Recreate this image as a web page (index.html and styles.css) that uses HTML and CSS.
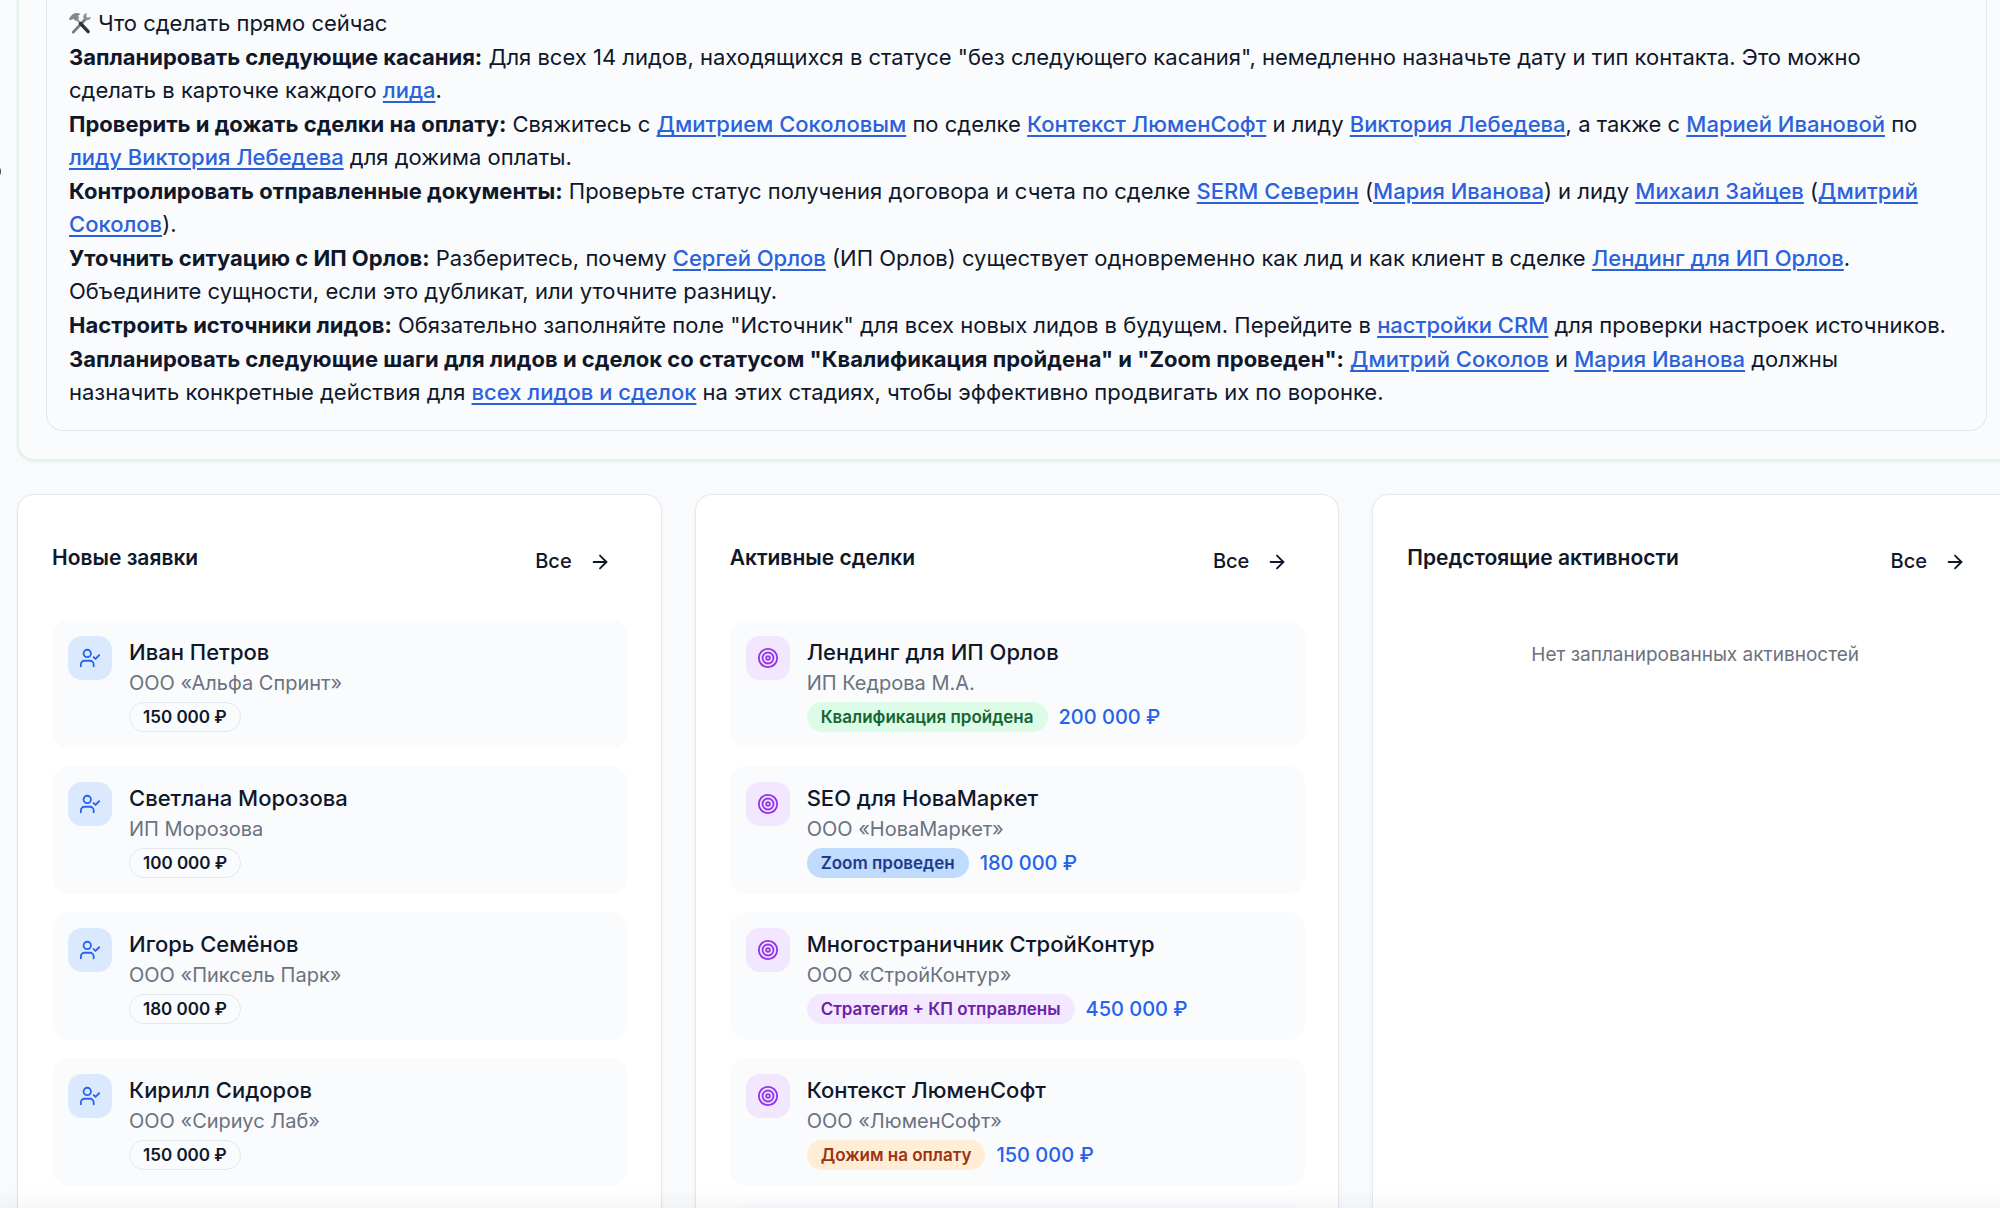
FILE: index.html
```html
<!DOCTYPE html>
<html lang="ru">
<head>
<meta charset="utf-8">
<title>CRM</title>
<meta name="viewport" content="width=device-width, initial-scale=1">
<link rel="stylesheet" href="styles.css">
</head>
<body>
<svg class="sprite" aria-hidden="true">
  <symbol id="user-check" viewBox="0 0 24 24"><path d="m16 11 2 2 4-4"/><path d="M16 21v-2a4 4 0 0 0-4-4H6a4 4 0 0 0-4 4v2"/><circle cx="9" cy="7" r="4"/></symbol>
  <symbol id="target" viewBox="0 0 24 24"><circle cx="12" cy="12" r="10"/><circle cx="12" cy="12" r="6"/><circle cx="12" cy="12" r="2"/></symbol>
  <symbol id="arrow" viewBox="0 0 24 24"><path d="M5 12h14"/><path d="m12 5 7 7-7 7"/></symbol>
</svg>
<span class="edge-mark" aria-hidden="true"></span>
<main class="page">
  <section class="panel">
    <div class="report">
      <p><svg class="tools" viewBox="0 0 24 24" aria-hidden="true"><path d="M17 8 4.500 21.500" stroke="#777b81" stroke-width="3" stroke-linecap="round"/><path d="M18.500 1.500q-4.500 1-3.500 5.500l2 2q5 1 6-3.500l-3.500 1-1.500-1.500z" fill="#8d9298"/><path d="m8 8 4 4.500" stroke="#8d9298" stroke-width="2"/><path d="m12 12.500 8 8.500" stroke="#2f3135" stroke-width="3.500" stroke-linecap="round"/><path d="M1 9.500 0 7l3.500-4Q8 .500 12 2.500L9.500 4.500l1 2.500-3.500 3-2.500-2.500z" fill="#83888e"/></svg> Что сделать прямо сейчас</p>
      <p><strong>Запланировать следующие касания:</strong> Для всех 14 лидов, находящихся в статусе "без следующего касания", немедленно назначьте дату и тип контакта. Это можно сделать в карточке каждого <a href="#">лида</a>.</p>
      <p><strong>Проверить и дожать сделки на оплату:</strong> Свяжитесь с <a href="#">Дмитрием Соколовым</a> по сделке <a href="#">Контекст ЛюменСофт</a> и лиду <a href="#">Виктория Лебедева</a>, а также с <a href="#">Марией Ивановой</a> по <a href="#">лиду Виктория Лебедева</a> для дожима оплаты.</p>
      <p><strong>Контролировать отправленные документы:</strong> Проверьте статус получения договора и счета по сделке <a href="#">SERM Северин</a> (<a href="#">Мария Иванова</a>) и лиду <a href="#">Михаил Зайцев</a> (<a href="#">Дмитрий Соколов</a>).</p>
      <p><strong>Уточнить ситуацию с ИП Орлов:</strong> Разберитесь, почему <a href="#">Сергей Орлов</a> (ИП Орлов) существует одновременно как лид и как клиент в сделке <a href="#">Лендинг для ИП Орлов</a>. Объедините сущности, если это дубликат, или уточните разницу.</p>
      <p><strong>Настроить источники лидов:</strong> Обязательно заполняйте поле "Источник" для всех новых лидов в будущем. Перейдите в <a href="#">настройки CRM</a> для проверки настроек источников.</p>
      <p><strong>Запланировать следующие шаги для лидов и сделок со статусом "Квалификация пройдена" и "Zoom проведен":</strong> <a href="#">Дмитрий Соколов</a> и <a href="#">Мария Иванова</a> должны назначить конкретные действия для <a href="#">всех лидов и сделок</a> на этих стадиях, чтобы эффективно продвигать их по воронке.</p>
    </div>
  </section>
  <div class="columns">
    <section class="card">
      <header class="card-head"><h2>Новые заявки</h2><a class="all" href="#">Все <svg class="icon"><use href="#arrow"/></svg></a></header>
      <ul class="list">
        <li class="row"><span class="avatar lead"><svg class="icon"><use href="#user-check"/></svg></span><div><h3>Иван Петров</h3><p class="org">ООО «Альфа Спринт»</p><div class="meta"><span class="badge outline">150 000 ₽</span></div></div></li>
        <li class="row"><span class="avatar lead"><svg class="icon"><use href="#user-check"/></svg></span><div><h3>Светлана Морозова</h3><p class="org">ИП Морозова</p><div class="meta"><span class="badge outline">100 000 ₽</span></div></div></li>
        <li class="row"><span class="avatar lead"><svg class="icon"><use href="#user-check"/></svg></span><div><h3>Игорь Семёнов</h3><p class="org">ООО «Пиксель Парк»</p><div class="meta"><span class="badge outline">180 000 ₽</span></div></div></li>
        <li class="row"><span class="avatar lead"><svg class="icon"><use href="#user-check"/></svg></span><div><h3>Кирилл Сидоров</h3><p class="org">ООО «Сириус Лаб»</p><div class="meta"><span class="badge outline">150 000 ₽</span></div></div></li>
      </ul>
    </section>
    <section class="card">
      <header class="card-head"><h2>Активные сделки</h2><a class="all" href="#">Все <svg class="icon"><use href="#arrow"/></svg></a></header>
      <ul class="list">
        <li class="row"><span class="avatar deal"><svg class="icon"><use href="#target"/></svg></span><div><h3>Лендинг для ИП Орлов</h3><p class="org">ИП Кедрова М.А.</p><div class="meta"><span class="badge green">Квалификация пройдена</span><span class="sum">200 000 ₽</span></div></div></li>
        <li class="row"><span class="avatar deal"><svg class="icon"><use href="#target"/></svg></span><div><h3>SEO для НоваМаркет</h3><p class="org">ООО «НоваМаркет»</p><div class="meta"><span class="badge blue">Zoom проведен</span><span class="sum">180 000 ₽</span></div></div></li>
        <li class="row"><span class="avatar deal"><svg class="icon"><use href="#target"/></svg></span><div><h3>Многостраничник СтройКонтур</h3><p class="org">ООО «СтройКонтур»</p><div class="meta"><span class="badge purple">Стратегия + КП отправлены</span><span class="sum">450 000 ₽</span></div></div></li>
        <li class="row"><span class="avatar deal"><svg class="icon"><use href="#target"/></svg></span><div><h3>Контекст ЛюменСофт</h3><p class="org">ООО «ЛюменСофт»</p><div class="meta"><span class="badge orange">Дожим на оплату</span><span class="sum">150 000 ₽</span></div></div></li>
        <li class="row"></li>
      </ul>
    </section>
    <section class="card">
      <header class="card-head"><h2>Предстоящие активности</h2><a class="all" href="#">Все <svg class="icon"><use href="#arrow"/></svg></a></header>
      <p class="empty">Нет запланированных активностей</p>
    </section>
  </div>
</main>
</body>
</html>
```
FILE: styles.css
```css
* { box-sizing: border-box; }
html, body { margin: 0; height: 100%; }
body {
  overflow: hidden;
  background: #f9fafc;
  color: #0f172a;
  font-family: Inter, "Liberation Sans", sans-serif;
  font-size: 22px;
  line-height: 33px;
}
/* soft shade along the bottom edge of the window */
body::after {
  content: "";
  position: fixed;
  inset: auto 0 0;
  height: 20px;
  background: linear-gradient(rgba(15, 23, 42, 0), rgba(15, 23, 42, .03));
}
h2, h3, p, ul { margin: 0; padding: 0; }
.sprite { position: absolute; width: 0; height: 0; }
.edge-mark {
  position: absolute;
  left: -14px;
  top: 164px;
  width: 15px;
  height: 15px;
  border: 2px solid #334155;
  border-radius: 50%;
}
.icon {
  width: 22px;
  height: 22px;
  fill: none;
  stroke: currentColor;
  stroke-width: 2;
  stroke-linecap: round;
  stroke-linejoin: round;
}
.page { margin-right: -17px; padding-left: 17px; }
.panel {
  padding: 0 28px 28px 27px;
  border: 2px solid #def3ec;
  border-top: 0;
  border-radius: 0 0 17px 17px;
  background: #fafbfd;
  box-shadow: 0 1px 3px rgba(15, 23, 42, .06);
}
.report {
  display: flex;
  flex-direction: column;
  gap: 1px;
  padding: 7px 35px 21px 22px;
  border: 1px solid #e2e5ea;
  border-top: 0;
  border-radius: 0 0 17px 17px;
}
.report a {
  color: #2b62dc;
  font-weight: 500;
  text-decoration: underline;
  text-decoration-thickness: 2px;
  text-underline-offset: 3px;
}
.report strong { font-weight: 700; }
.tools { width: 23px; height: 24px; vertical-align: -4px; }
.columns {
  display: grid;
  grid-template-columns: repeat(3, 1fr);
  gap: 33px;
  margin-top: 33px;
}
.card {
  min-height: 760px;
  padding: 0 33px 0 34px;
  border: 1px solid #e2e8f0;
  border-radius: 17px;
  background: #fff;
  box-shadow: 0 1px 3px rgba(15, 23, 42, .06);
}
.card-head {
  display: flex;
  align-items: center;
  justify-content: space-between;
  height: 125px;
}
h2 { font-size: 21px; font-weight: 600; }
.all {
  display: flex;
  align-items: center;
  gap: 17px;
  padding: 8px 17px 0;
  color: inherit;
  font-size: 20px;
  font-weight: 500;
  text-decoration: none;
}
.list { display: flex; flex-direction: column; gap: 18px; list-style: none; }
.row {
  display: flex;
  gap: 17px;
  min-height: 128px;
  padding: 16px;
  border-radius: 17px;
  background: #fafbfd;
}
.avatar {
  display: grid;
  place-items: center;
  width: 44px;
  height: 44px;
  border-radius: 14px;
}
.lead { background: #dbe9fe; color: #2b62eb; }
.deal { background: #f2e7fe; color: #9333ea; }
h3 { font-size: 22px; font-weight: 500; }
.org { color: #6b7280; font-size: 20px; line-height: 28px; }
.meta { display: flex; align-items: center; gap: 11px; margin-top: 5px; }
.badge {
  padding: 0 13px;
  border: 1px solid transparent;
  border-radius: 15px;
  font-size: 17px;
  font-weight: 600;
  line-height: 28px;
}
.outline { border-color: #e2e8f0; }
.green { background: #dcfce7; color: #166534; }
.blue { background: #bfdbfe; color: #1e3a8a; }
.purple { background: #f3e8ff; color: #6b21a8; }
.orange { background: #ffedd5; color: #9a3412; }
.sum { color: #2563eb; font-size: 20px; font-weight: 500; line-height: 28px; }
.empty { padding-top: 18px; color: #6b7280; font-size: 19px; text-align: center; }
```
